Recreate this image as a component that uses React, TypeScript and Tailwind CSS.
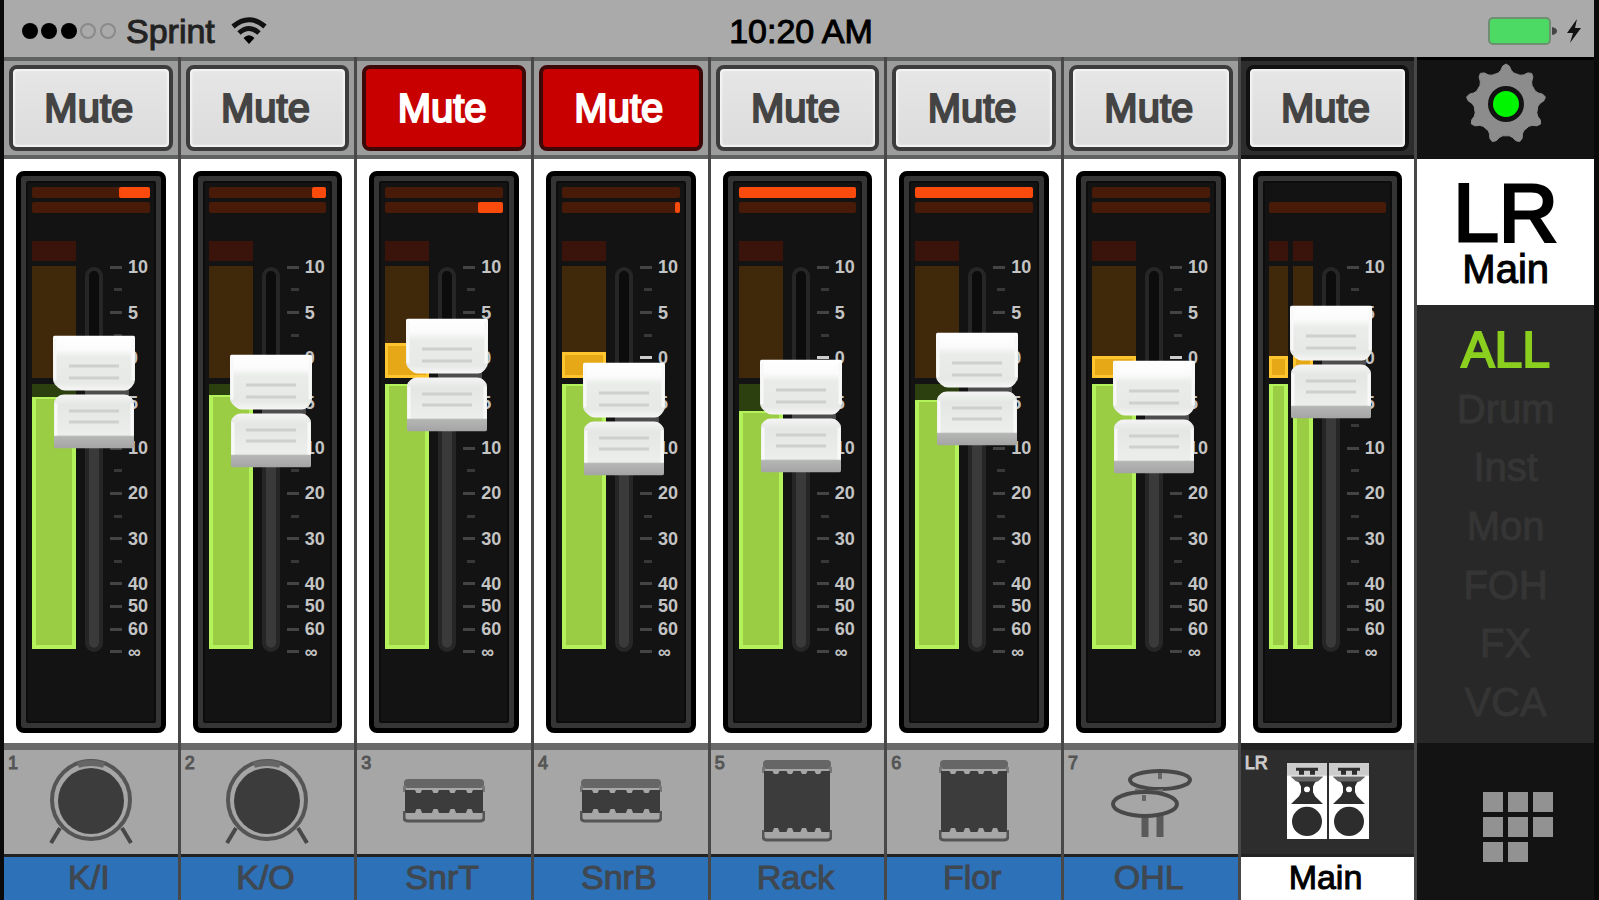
import { useState } from 'react'

type Channel = {
  id: string
  name: string
  icon: 'kick' | 'snare' | 'tom' | 'cymbal' | 'speakers'
  muted?: boolean
  gate: number
  comp: number
  green: number
  amber: number
  fader: number
}

const channels: Channel[] = [
  { id: '1', name: 'K/I', icon: 'kick', gate: 26, comp: 0, green: 95, amber: 0, fader: 260 },
  { id: '2', name: 'K/O', icon: 'kick', gate: 12, comp: 0, green: 96, amber: 0, fader: 241 },
  { id: '3', name: 'SnrT', icon: 'snare', muted: true, gate: 0, comp: 21, green: 100, amber: 31, fader: 277 },
  { id: '4', name: 'SnrB', icon: 'snare', muted: true, gate: 0, comp: 4, green: 100, amber: 23, fader: 233 },
  { id: '5', name: 'Rack', icon: 'tom', gate: 100, comp: 0, green: 90, amber: 0, fader: 236 },
  { id: '6', name: 'Flor', icon: 'tom', gate: 100, comp: 0, green: 94, amber: 0, fader: 263 },
  { id: '7', name: 'OHL', icon: 'cymbal', gate: 0, comp: 0, green: 100, amber: 20, fader: 235 },
  { id: 'LR', name: 'Main', icon: 'speakers', gate: 0, comp: 0, green: 100, amber: 20, fader: 290 },
]

// empty entries are the short ticks between the numbers
const scale = ['10', '', '5', '', '0', '', '5', '', '10', '', '20', '', '30', '', '40', '50', '60', '∞']
const views = ['ALL', 'Drum', 'Inst', 'Mon', 'FOH', 'FX', 'VCA']
const FADER_MAX = 385

function StatusBar() {
  return (
    <header className="grid h-[57px] grid-cols-3 items-center bg-[#aaaaaa] pt-1 pr-3 pl-4 text-[34px] leading-10 text-black">
      <div className="flex items-center gap-2">
        <svg width="98" height="20" viewBox="0 0 98 20">
          {[10, 29, 49].map((x) => <circle key={x} cx={x} cy="10" r="8" />)}
          {[68, 88].map((x) => <circle key={x} cx={x} cy="10" r="7" fill="none" stroke="#8a8a8a" strokeWidth="2" />)}
        </svg>
        <span className="text-[#222] [-webkit-text-stroke:1px]">Sprint</span>
        <svg width="36" height="28" viewBox="0 0 36 28" className="ml-2" fill="none" stroke="#111" strokeWidth="5">
          <path d="M2 9.500Q18-4 34 9.500" />
          <path d="M8 16Q18 7 28 16" />
          <path d="M12.500 21Q18 15.500 23.500 21L18 27z" fill="#000" stroke="none" />
        </svg>
      </div>
      <div className="text-center [-webkit-text-stroke:1px]">10:20 AM</div>
      <div className="flex items-center justify-end gap-2">
        <svg width="72" height="30" viewBox="0 0 72 30">
          <rect x="3" y="2" width="61" height="26" rx="4" fill="#4cd964" stroke="#6f8f72" strokeWidth="2" />
          <path d="M66 11q5 1 5 4t-5 4z" fill="#444" />
        </svg>
        <svg width="16" height="26" viewBox="0 0 16 26">
          <path d="M11 1L1 15h6L4 25L15 10H9z" fill="#111" />
        </svg>
      </div>
    </header>
  )
}

function DrumShell({ w, h }: { w: number; h: number }) {
  const n = 4
  const step = (w - 14) / n
  const notches = Array.from({ length: n }, (_, i) => 7 + step * i + step / 2)
  return (
    <svg width={w} height={h} viewBox={`0 0 ${w} ${h}`}>
      <rect x="1" y="0" width={w - 2} height="9" rx="4" fill="#666" />
      <rect x="0" y="7" width="3" height="6" fill="#777" />
      <rect x={w - 3} y="7" width="3" height="6" fill="#777" />
      <rect x="2" y="11" width={w - 4} height={h - 21} fill="#3c3c3c" />
      {notches.map((x) => (
        <g key={x} fill="#a6a6a6">
          <path d={`M${x - 4} 10h8l-2 4h-4z`} />
          <path d={`M${x - 4} ${h - 9}h8l-2-5h-4z`} />
        </g>
      ))}
      <path d={`M1 ${h - 12}v6q0 4 4 4h${w - 10}q4 0 4-4v-6`} fill="none" stroke="#555" strokeWidth="3" />
    </svg>
  )
}

function ChannelIcon({ kind }: { kind: Channel['icon'] }) {
  if (kind === 'kick') {
    return (
      <svg width="84" height="86" viewBox="0 0 84 86" fill="none" stroke="#484848">
        <path d="M11 70L2 85M73 70L82 85" strokeWidth="4" />
        <circle cx="42" cy="42" r="39" strokeWidth="4" stroke="#555" fill="#a6a6a6" />
        <path d="M29 7Q42 3 55 7" strokeWidth="6" stroke="#666" />
        <circle cx="42" cy="43" r="33" fill="#3c3c3c" stroke="none" />
      </svg>
    )
  }
  if (kind === 'snare') return <DrumShell w={82} h={44} />
  if (kind === 'tom') return <DrumShell w={70} h={82} />
  if (kind === 'cymbal') {
    return (
      <svg width="82" height="76" viewBox="0 -6 82 76" fill="none" stroke="#484848">
        <path d="M35 46v22M50 42v26" strokeWidth="7" stroke="#5a5a5a" />
        <ellipse cx="50" cy="11" rx="30" ry="9" strokeWidth="4" fill="#a6a6a6" />
        <path d="M50 4v6" strokeWidth="4" stroke="#666" />
        <path d="M25 21q12 4 28 1" strokeWidth="4" stroke="#777" />
        <ellipse cx="35" cy="35" rx="32" ry="12" strokeWidth="4" fill="#a6a6a6" />
        <path d="M34 26v6" strokeWidth="4" stroke="#666" />
      </svg>
    )
  }
  return (
    <svg width="84" height="76" viewBox="-2 0 84 78" preserveAspectRatio="none">
      {[0, 42].map((x) => (
        <g key={x} transform={`translate(${x} 0)`} fill="#2d2d2d">
          <rect width="40" height="78" fill="#fff" />
          <rect width="40" height="13" fill="#ccc" />
          <path d="M9 5h22v3H9zM12 8h5v4h-5zM23 8h5v4h-5z" />
          <path d="M4 14h32l-8 6-2 4v6l2 4 8 8H4l8-8 2-4v-6l-2-4z" />
          <path d="M4 14h32l-5 5H9z" fill="#666" />
          <circle cx="20" cy="27" r="3" fill="#fff" />
          <circle cx="20" cy="60" r="15" />
        </g>
      ))}
    </svg>
  )
}

function FaderCap() {
  return (
    <svg width="82" height="113" viewBox="0 0 82 113" className="block">
      <defs>
        <linearGradient id="capTop" x1="0" y1="0" x2="0" y2="1">
          <stop offset="0" stopColor="#ffffff" />
          <stop offset="0.25" stopColor="#fbfbfb" />
          <stop offset="0.4" stopColor="#e9ece9" />
          <stop offset="0.85" stopColor="#e6e9e5" />
          <stop offset="1" stopColor="#f6f6f6" />
        </linearGradient>
        <linearGradient id="capBottom" x1="0" y1="0" x2="0" y2="1">
          <stop offset="0" stopColor="#f4f4f4" />
          <stop offset="0.2" stopColor="#e4e7e4" />
          <stop offset="0.75" stopColor="#eceeec" />
          <stop offset="0.78" stopColor="#b4b6b4" />
          <stop offset="1" stopColor="#a4a4a4" />
        </linearGradient>
      </defs>
      <rect x="32" y="52" width="44" height="10" fill="#4d4d4d" />
      <path d="M0 2q0-2 2-2h78q2 0 2 2v42q0 4-3 7l-2 2q-2 2-5 2H12q-4 0-7-3l-3-3q-2-2-2-6z" fill="url(#capTop)" />
      <path d="M1 68q0-4 3-6l1-1q2-2 6-2h60q4 0 6 2l2 2q2 2 2 5v43q0 2-2 2H3q-2 0-2-2z" fill="url(#capBottom)" />
      <path d="M16 30.500h50M16 42.500h50M16 75.500h50M16 86.500h50" stroke="#cdd0cd" strokeWidth="3" />
      <path d="M2 3v42M80 3v42M3 68v32M79 68v32" stroke="#f8f8f8" strokeWidth="3" />
    </svg>
  )
}

function Meter({ green, amber }: { green: number; amber: number }) {
  return (
    <div className="flex flex-1 flex-col">
      <div className="h-5 bg-[#3a140a]" />
      <div className="mt-[5px] flex h-28 flex-col justify-end bg-[#40280a]">
        {amber > 0 && (
          <div className="border-3 border-[#ffc52e] bg-[#e6a817]" style={{ height: `${amber}%` }} />
        )}
      </div>
      <div className="mt-1.5 flex h-[265px] flex-col justify-end bg-[#2c400f]">
        <div className="border-4 border-t-2 border-[#b4f25c] bg-[#9acd44]" style={{ height: `${green}%` }} />
      </div>
    </div>
  )
}

function Reduction({ amount }: { amount: number }) {
  return (
    <div className="flex h-[11px] justify-end rounded-xs bg-[#481a08]">
      <div className="rounded-xs bg-[#fa4a0c]" style={{ width: `${amount}%` }} />
    </div>
  )
}

function Strip({ channel }: { channel: Channel }) {
  const [muted, setMuted] = useState(!!channel.muted)
  const [level, setLevel] = useState(channel.fader)
  const main = channel.id === 'LR'

  return (
    <section className="flex flex-col border-r-3 border-[#484848]">
      <div className={`flex h-[102px] flex-col border-t-4 border-b-4 px-[5px] py-1 ${main ? 'border-[#151515] bg-[#2d2d2d]' : 'border-[#606262] bg-[#9c9c9c]'}`}>
        <button
          aria-pressed={muted}
          onClick={() => setMuted(!muted)}
          className={`flex-1 cursor-pointer rounded-lg border-4 pr-1 text-[40px] leading-none [-webkit-text-stroke:2px] ${
            muted
              ? 'border-[#3c0808] bg-[#c80000] text-white'
              : 'bg-linear-to-b from-[#e6e6e6] to-[#dcdcdc] text-[#444] shadow-[inset_0_0_2px_2px_#f4f4f4]'
          } ${main ? 'border-[#111]' : muted ? '' : 'border-[#3c3c3c]'}`}
        >
          Mute
        </button>
      </div>

      <div className="flex flex-1 flex-col bg-white px-3 pt-3 pb-2.5">
        <div className="flex flex-1 flex-col rounded-lg border-5 border-black bg-[#353535] p-[5px]">
          <div className="flex-1 rounded-xs border-2 border-[#0c0c0c] bg-[#131313] px-1 pt-1">
            <div className={main ? 'invisible' : ''}>
              <Reduction amount={channel.gate} />
            </div>
            <div className="mt-1">
              <Reduction amount={channel.comp} />
            </div>

            <div className="mt-7 flex">
              <div className="flex w-11 shrink-0 gap-[5px]">
                <Meter green={channel.green} amber={channel.amber} />
                {main && <Meter green={channel.green} amber={channel.amber} />}
              </div>

              <div className="relative mt-[26px] ml-[9px] h-[385px] w-[18px] shrink-0">
                <div className="flex h-full flex-col justify-end overflow-hidden rounded-full border-4 border-[#262626] bg-[#0c0c0c]">
                  <div className="-mx-1 -mb-1 bg-[#3a3a3a]" style={{ height: `${(level / FADER_MAX) * 100}%` }} />
                </div>
                <div
                  className="absolute left-1/2 z-10 -translate-x-1/2 translate-y-1/2"
                  style={{ bottom: `${(level / FADER_MAX) * 100}%` }}
                >
                  <FaderCap />
                </div>
                <input
                  type="range"
                  aria-label={`${channel.name} level`}
                  min={0}
                  max={FADER_MAX}
                  value={level}
                  onChange={(e) => setLevel(Number(e.target.value))}
                  className="absolute inset-y-0 left-1/2 z-20 h-full w-20 -translate-x-1/2 cursor-pointer opacity-0 [direction:rtl] [writing-mode:vertical-lr]"
                />
              </div>

              <ul className="mt-[15px] ml-[7px] flex h-[407px] flex-1 flex-col text-[18px] leading-none font-bold text-[#c4c4c4]">
                {scale.map((mark, i) => (
                  <li key={i} className="flex flex-1 items-center gap-1.5">
                    <span className="flex w-3 justify-end">
                      <span className={`block h-[3px] ${mark === '0' ? 'w-3 bg-[#ccc]' : mark ? 'w-3 bg-[#444]' : 'w-2 bg-[#383838]'}`} />
                    </span>
                    {mark}
                  </li>
                ))}
              </ul>
            </div>
          </div>
        </div>
      </div>

      <button className={`relative flex h-[114px] cursor-pointer items-center justify-center border-t-7 border-b-3 pb-0.5 ${main ? 'border-[#222] bg-[#2d2d2d]' : 'border-t-[#696969] border-b-[#222] bg-[#a6a6a6]'}`}>
        <span className={`absolute top-1 left-1 text-[18px] leading-none [-webkit-text-stroke:1px] ${main ? 'text-[#ccc]' : 'text-[#555]'}`}>
          {channel.id}
        </span>
        <ChannelIcon kind={channel.icon} />
      </button>
      <div className={`h-[43px] pr-1 text-center text-[34px] leading-10 [-webkit-text-stroke:1px] ${main ? 'bg-white text-black' : 'bg-[#2d71b8] text-[#3f4750]'}`}>
        {channel.name}
      </div>
    </section>
  )
}

function Gear() {
  // nine teeth around the hub, the first one pointing up
  const points: string[] = []
  for (let i = 0; i < 9; i++) {
    const parts = [[-14, 32], [-9, 34], [-5, 38], [0, 40], [5, 38], [9, 34], [14, 32]]
    parts.forEach(([deg, r]) => {
      const a = ((i * 40 + deg - 90) * Math.PI) / 180
      points.push(`${(42 + r * Math.cos(a)).toFixed(1)},${(42 + r * Math.sin(a)).toFixed(1)}`)
    })
  }
  return (
    <svg width="84" height="84" viewBox="0 0 84 84">
      <polygon points={points.join(' ')} fill="#8c8c8c" stroke="#8c8c8c" strokeLinejoin="round" />
      <circle cx="42" cy="42" r="18" fill="#131313" />
      <circle cx="42" cy="42" r="13" fill="#00f500" />
    </svg>
  )
}

function SideBar() {
  const [view, setView] = useState('ALL')
  return (
    <aside className="flex flex-col bg-[#282828]">
      <button aria-label="Settings" className="flex h-[102px] cursor-pointer items-center justify-center border-t-3 border-black bg-[#131313] pb-3">
        <Gear />
      </button>
      <button className="flex h-[146px] cursor-pointer flex-col items-center bg-white pt-4 text-black">
        <span className="text-[82px] leading-[76px] [-webkit-text-stroke:3px]">LR</span>
        <span className="text-[40px] leading-[36px] [-webkit-text-stroke:1px]">Main</span>
      </button>
      <nav className="flex flex-1 flex-col pt-4 pb-3">
        {views.map((v) => (
          <button
            key={v}
            onClick={() => setView(v)}
            className={`flex-1 cursor-pointer leading-none ${v === view ? 'text-[50px] text-[#8bcf1f] [-webkit-text-stroke:2px]' : 'text-[40px] text-[#353535] [-webkit-text-stroke:1px]'}`}
          >
            {v}
          </button>
        ))}
      </nav>
      <button aria-label="Channel grid" className="flex h-[157px] cursor-pointer items-center justify-center bg-[#131313] pt-2.5 pl-6">
        <span className="grid grid-cols-3 gap-[5px]">
          {Array.from({ length: 8 }, (_, i) => (
            <span key={i} className="size-5 bg-[#929292]" />
          ))}
        </span>
      </button>
    </aside>
  )
}

export default function App() {
  return (
    <div className="flex min-h-screen flex-col overflow-hidden bg-[#0a0a0a] pr-[5px] pl-1 font-['Liberation_Sans',Arial,sans-serif]">
      <StatusBar />
      <main className="grid flex-1 grid-cols-9">
        {channels.map((c) => (
          <Strip key={c.id} channel={c} />
        ))}
        <SideBar />
      </main>
    </div>
  )
}
